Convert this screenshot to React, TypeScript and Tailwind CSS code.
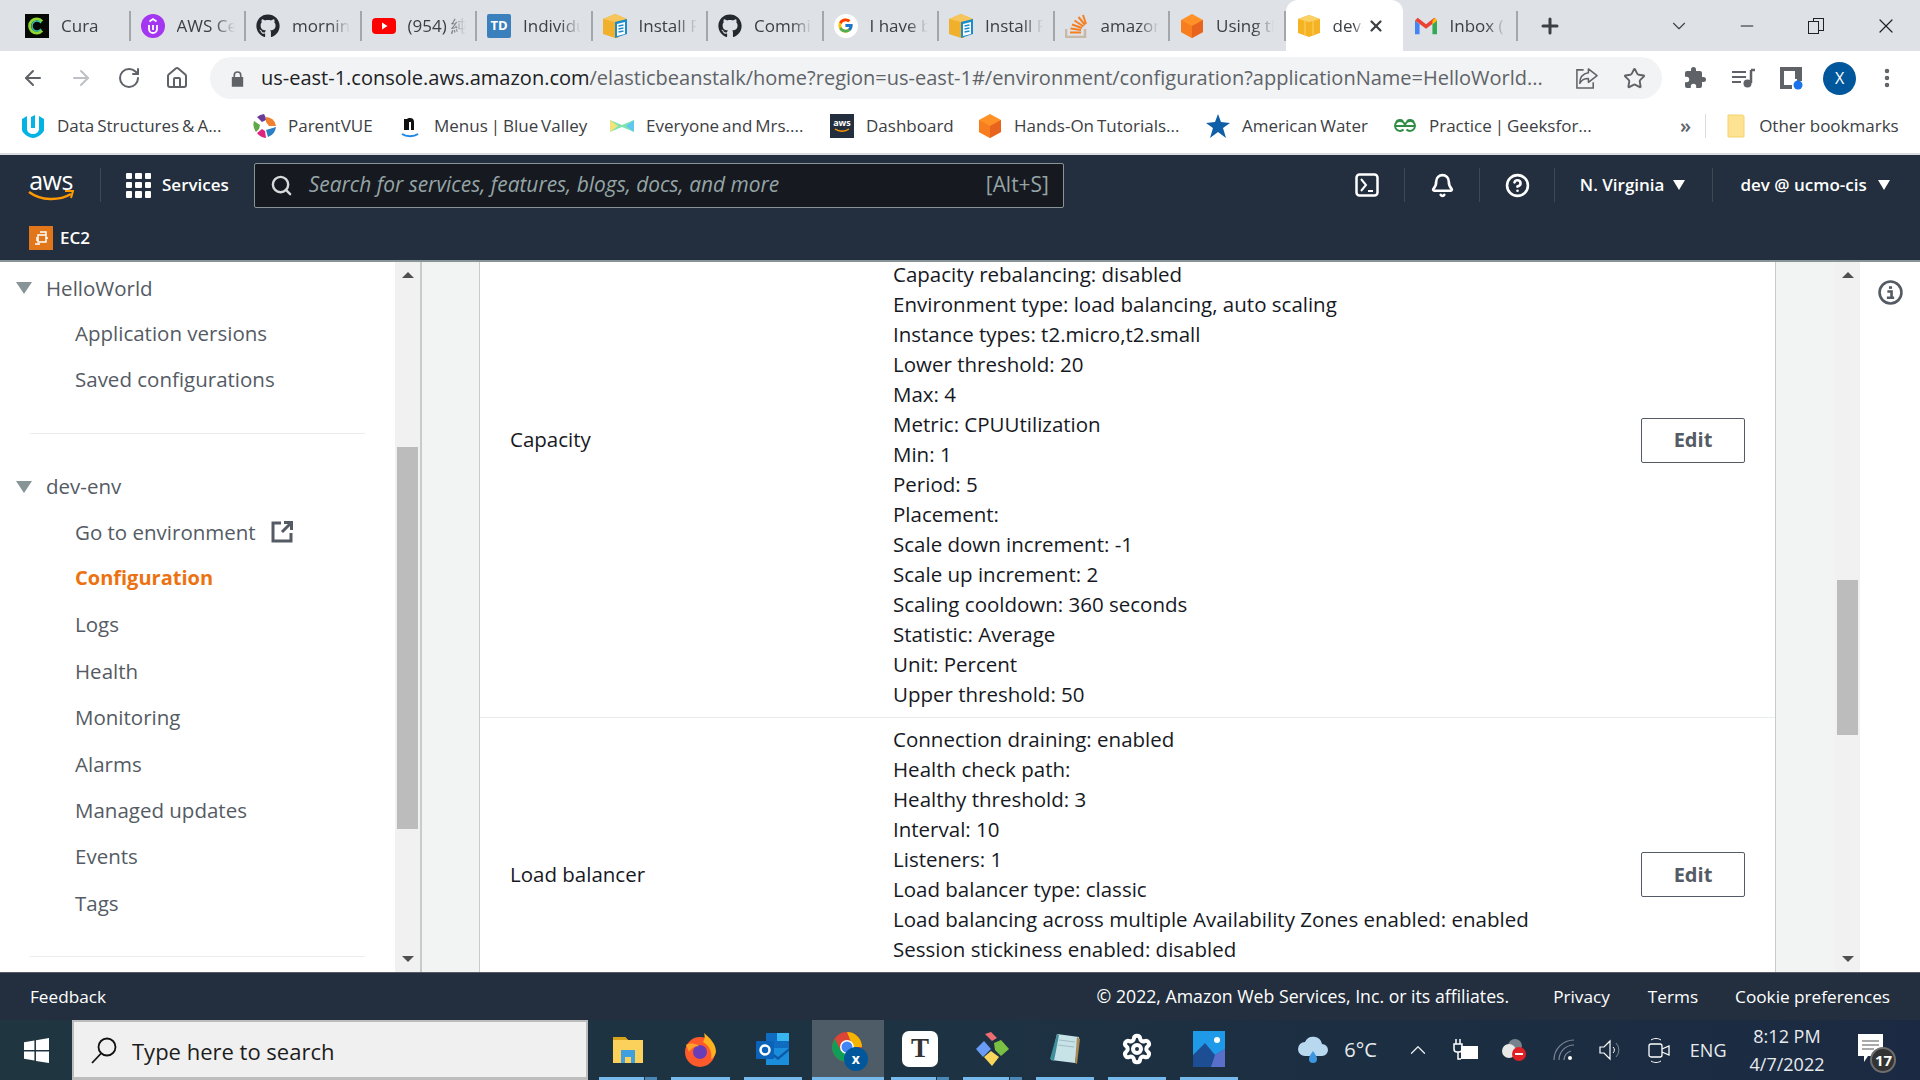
import React from 'react';
import { ArrowLeft, ArrowRight, RotateCw, Home, Star, Search, Bell, CircleHelp, Plus, X, Minus, ChevronDown, ChevronUp, EllipsisVertical, Settings } from 'lucide-react';
import { FaGithub } from 'react-icons/fa';
import { FcGoogle } from 'react-icons/fc';

const Cura = () => (
    <svg viewBox="0 0 24 24" className="w-full h-full"><rect width="24" height="24" fill="#050805" /><path d="M17 7.5a7 7 0 1 0 0 9" fill="none" stroke="#8fd630" strokeWidth="3" /><path d="M16 9a5 5 0 1 0 0 6" fill="none" stroke="#38bdb0" strokeWidth="1.5" /></svg>
);
const Udemy = () => (
    <svg viewBox="0 0 24 24" className="w-full h-full"><circle cx="12" cy="12" r="12" fill="#a435f0" /><path d="M8 11v4a4 4 0 0 0 8 0v-4M12 11v5M8.5 7.5 12 5l3.500 2.500" fill="none" stroke="#fff" strokeWidth="1.8" /></svg>
);
const Github = () => <FaGithub className="w-full h-full text-[#24292f]" />;
const Youtube = () => (
    <svg viewBox="0 0 24 24" className="w-full h-full"><rect y="4" width="24" height="16" rx="4" fill="#f00" /><path d="M10 8.500v7l5.500-3.500z" fill="#fff" /></svg>
);
const Td = () => (
    <div className="w-full h-full bg-[#3a80bd] rounded-[2px] flex items-center justify-center text-white text-[13px] font-bold font-['Open_Sans',sans-serif]">TD</div>
);
const InstallBox = () => (
    <svg viewBox="0 0 24 24" className="w-full h-full"><path d="M0 5l12-5 12 5v5l-9 1v13l-3 0-12-4z" fill="#f0b02c" /><path d="M0 5l12 3 12-3-12-5z" fill="#f6c65c" /><path d="M12 8l12-3v15l-12 4z" fill="#1a8ccb" /><path d="M14 10l8-2v12l-8 2z" fill="#fff" /><path d="M15.500 12l5-1M15.500 15l5-1M15.500 18l5-1" stroke="#1a8ccb" strokeWidth="1.500" /></svg>
);
const Google = () => (
    <div className="w-full h-full rounded-full bg-white flex items-center justify-center"><FcGoogle className="w-[17px] h-[17px]" /></div>
);
const Stack = () => (
    <svg viewBox="0 0 24 24" className="w-full h-full"><path d="M1 15v8h19v-8" fill="none" stroke="#c7b9a8" strokeWidth="2.500" /><path d="M5 18.500h11M5.500 14.500l10.500 1.500M7 10.500l10 3.500M9.500 6.500l9 6M13.500 3l6.500 8M18 1l3 9" stroke="#f48024" strokeWidth="2" /></svg>
);
const OrangeCube = () => (
    <svg viewBox="0 0 24 24" className="w-full h-full"><path d="M12 0l11 6v12l-11 6-11-6V6z" fill="#ff9126" /><path d="M12 12l11-6v12l-11 6z" fill="#e8641e" /><path d="M12 12v12L1 18V6z" fill="#f87d1f" /></svg>
);
const YellowBox = () => (
    <svg viewBox="0 0 24 24" className="w-full h-full"><path d="M1 5l11-4 11 4v14l-11 4-11-4z" fill="#f5b324" /><path d="M1 5l11 3 11-3-11-4z" fill="#fbd166" /><path d="M8 7v15M16 7v15" stroke="#fbd166" strokeWidth="1" /></svg>
);
const Gmail = () => (
    <svg viewBox="0 0 24 24" className="w-full h-full"><path d="M0 6v15h5V10z" fill="#4285f4" /><path d="M24 6v15h-5V10z" fill="#34a853" /><path d="M0 6l12 9 12-9-3-3-9 7-9-7z" fill="#ea4335" /><path d="M19 6l3-3 2 3-5 4z" fill="#fbbc04" /></svg>
);
const Udacity = () => (
    <svg viewBox="0 0 24 24" className="w-full h-full"><path d="M1 5l5-3v13c0 3 3 5 6 5s6-2 6-5V2l5 3v11c0 3-7 8-11 8S1 19 1 16z" fill="#02b3e4" /><path d="M10 3l4-2v13h-4z" fill="#02b3e4" /></svg>
);
const ParentVue = () => (
    <svg viewBox="0 0 24 24" className="w-full h-full"><path d="M12 0a12 12 0 0 1 2 6l-4 2-5-5a12 12 0 0 1 7-3z" fill="#6a3c96" /><path d="M14 3a10 10 0 0 1 10 9l-7 0-3-4z" fill="#f07f2e" /><path d="M24 13a12 12 0 0 1-8 10l-2-7z" fill="#2c7fc2" /><path d="M14 24a12 12 0 0 1-9-5l5-4 3 2z" fill="#e0237e" /><path d="M4 18a12 12 0 0 1-2-11l6 4-1 4z" fill="#5fa84a" /></svg>
);
const Noodle = () => (
    <svg viewBox="0 0 24 24" className="w-full h-full"><path d="M6 16V5h3a3 3 0 0 1 3-1 4 4 0 0 1 4 4v8h-3V8h-2v8z" fill="#111" /><path d="M4 20c4 3 12 3 16 0" fill="none" stroke="#1e88e5" strokeWidth="2" /></svg>
);
const Everyone = () => (
    <svg viewBox="0 0 24 24" className="w-full h-full"><path d="M0 6l12 5 12-5v12l-12-5-12 5z" fill="#7fe3b0" /><path d="M0 6l8 6-8 6z" fill="#f5e27a" /><path d="M24 6l-8 6 8 6z" fill="#62c7f0" /></svg>
);
const AwsTile = () => (
    <svg viewBox="0 0 24 24" className="w-full h-full"><rect width="24" height="24" fill="#232f3e" /><text x="12" y="12" textAnchor="middle" fontSize="9" fontWeight="700" fill="#fff" fontFamily="Open Sans">aws</text><path d="M5 15c4 3 10 3 14 0" fill="none" stroke="#f90" strokeWidth="1.500" /></svg>
);
const BlueStar = () => (
    <svg viewBox="0 0 24 24" className="w-full h-full"><path d="M12 0l3 8 9 1-7 5 3 10-8-6-8 6 3-10-7-5 9-1z" fill="#0f5ea8" /></svg>
);
const Gfg = () => (
    <svg viewBox="0 0 24 24" className="w-full h-full"><path d="M2 12h20M12 12a5 5 0 1 0-1.500 3.500M12 12a5 5 0 1 1 1.500 3.500" fill="none" stroke="#2f8d46" strokeWidth="2" /><path d="M3 8a5 5 0 0 1 7-1M21 8a5 5 0 0 0-7-1" fill="none" stroke="#2f8d46" strokeWidth="2" /></svg>
);

const tabs = [
    { icon: <Cura />, title: 'Cura' },
    { icon: <Udemy />, title: 'AWS Certified' },
    { icon: <Github />, title: 'morning-' },
    { icon: <Youtube />, title: '(954) 純音' },
    { icon: <Td />, title: 'Individual' },
    { icon: <InstallBox />, title: 'Install Python' },
    { icon: <Github />, title: 'Commits' },
    { icon: <Google />, title: 'I have been' },
    { icon: <InstallBox />, title: 'Install Python' },
    { icon: <Stack />, title: 'amazon-' },
    { icon: <OrangeCube />, title: 'Using the' },
];

const bookmarks = [
    { icon: <Udacity />, label: 'Data Structures & A...', w: 231 },
    { icon: <ParentVue />, label: 'ParentVUE', w: 146 },
    { icon: <Noodle />, label: 'Menus | Blue Valley', w: 212 },
    { icon: <Everyone />, label: 'Everyone and Mrs....', w: 220 },
    { icon: <AwsTile />, label: 'Dashboard', w: 148 },
    { icon: <OrangeCube />, label: 'Hands-On Tutorials...', w: 228 },
    { icon: <BlueStar />, label: 'American Water', w: 187 },
    { icon: <Gfg />, label: 'Practice | Geeksfor...', w: 287 },
];

const capacityLines = [
    'Capacity rebalancing: disabled',
    'Environment type: load balancing, auto scaling',
    'Instance types: t2.micro,t2.small',
    'Lower threshold: 20',
    'Max: 4',
    'Metric: CPUUtilization',
    'Min: 1',
    'Period: 5',
    'Placement:',
    'Scale down increment: -1',
    'Scale up increment: 2',
    'Scaling cooldown: 360 seconds',
    'Statistic: Average',
    'Unit: Percent',
    'Upper threshold: 50',
];

const balancerLines = [
    'Connection draining: enabled',
    'Health check path:',
    'Healthy threshold: 3',
    'Interval: 10',
    'Listeners: 1',
    'Load balancer type: classic',
    'Load balancing across multiple Availability Zones enabled: enabled',
    'Session stickiness enabled: disabled',
];

const navLinks = ['Logs', 'Health', 'Monitoring', 'Alarms', 'Managed updates', 'Events', 'Tags'];

const Tab: React.FC<{ icon: React.ReactNode; title: string }> = ({ icon, title }) => (
    <div className="w-[115.5px] h-[30px] shrink-0 flex items-center pl-[10px] border-r-2 border-[#a3a6aa]">
        <div className="w-6 h-6 shrink-0">{icon}</div>
        <div className="ml-3 w-[58px] overflow-hidden whitespace-nowrap text-[17px] text-[#3c4043] [mask-image:linear-gradient(to_right,black_65%,transparent)]">{title}</div>
    </div>
);

const Scrollbar: React.FC<{ thumbTop: number; thumbHeight: number }> = ({ thumbTop, thumbHeight }) => (
    <div className="w-[25px] h-full shrink-0 bg-[#f1f1f1] flex flex-col items-center">
        <div className="mt-[10px] w-0 h-0 border-x-[6px] border-x-transparent border-b-[6px] border-b-[#505050]" />
        <div className="w-[21px] bg-[#bcbcbc]" style={{ marginTop: thumbTop, height: thumbHeight }} />
        <div className="mt-auto mb-[10px] w-0 h-0 border-x-[6px] border-x-transparent border-t-[6px] border-t-[#505050]" />
    </div>
);

const NavRow: React.FC<{ children: React.ReactNode; active?: boolean }> = ({ children, active }) => (
    <div className={`h-[46.4px] pl-[75px] flex items-center ${active ? 'text-[#ec7211] font-bold text-[20px]' : 'text-[#545b64]'}`}>{children}</div>
);

const GroupRow: React.FC<{ label: string }> = ({ label }) => (
    <div className="h-[44px] flex items-center pl-[16px] text-[#545b64]">
        <div className="w-0 h-0 border-x-[8px] border-x-transparent border-t-[12px] border-t-[#879596]" />
        <span className="ml-[14px]">{label}</span>
    </div>
);

const EditButton = () => (
    <button className="w-[104px] h-[45px] shrink-0 bg-white border border-[#545b64] rounded-[2px] text-[20px] font-bold text-[#545b64]">Edit</button>
);

const Slot: React.FC<{ children: React.ReactNode; active?: boolean; split?: boolean; open?: boolean }> = ({ children, active, split, open = true }) => (
    <div className={`w-[72.25px] h-full shrink-0 flex flex-col ${active ? 'bg-[#4d5c66]' : ''}`}>
        <div className="flex-1 flex items-center justify-center"><div className="w-[36px] h-[36px] relative">{children}</div></div>
        {open && (
            <div className={`h-[3px] flex gap-[1px] ${active ? '' : 'mx-[7px]'}`}>
                <div className="flex-1 bg-[#76b9ed]" />
                {split && <div className="w-[12px] bg-[#4a87b5]" />}
            </div>
        )}
    </div>
);

const App: React.FC = () => {
    return (
        <div className="w-[1920px] h-[1080px] overflow-hidden flex flex-col font-['Open_Sans',sans-serif] bg-white">
            {/* browser tab strip */}
            <div className="h-[51px] shrink-0 bg-[#dee1e6] flex items-center pl-[15px]">
                {tabs.map((t, i) => <Tab key={i} icon={t.icon} title={t.title} />)}
                <div className="w-[117px] h-[51px] shrink-0 bg-white rounded-t-[12px] flex items-center pl-[11px]">
                    <div className="w-6 h-6 shrink-0"><YellowBox /></div>
                    <div className="ml-[12px] w-[30px] overflow-hidden whitespace-nowrap text-[17px] text-[#3c4043] [mask-image:linear-gradient(to_right,black_70%,transparent)]">dev-env</div>
                    <X className="ml-[4px] w-[18px] h-[18px] text-[#3c4043]" strokeWidth={3} />
                </div>
                <div className="w-[115px] h-[30px] shrink-0 flex items-center pl-[12px] border-r-2 border-[#a3a6aa]">
                    <div className="w-[22px] h-[22px] shrink-0"><Gmail /></div>
                    <div className="ml-[13px] w-[56px] overflow-hidden whitespace-nowrap text-[17px] text-[#3c4043] [mask-image:linear-gradient(to_right,black_65%,transparent)]">Inbox (17)</div>
                </div>
                <Plus className="ml-[20px] w-[24px] h-[24px] text-[#3c4043]" strokeWidth={3} />
                <ChevronDown className="ml-[106px] w-[22px] h-[22px] text-[#3c4043]" strokeWidth={1.2} />
                <Minus className="ml-[47px] w-[20px] h-[20px] text-[#202124]" strokeWidth={1.2} />
                <div className="ml-[51px] w-[16px] h-[16px] relative">
                    <div className="absolute right-0 top-0 w-[11px] h-[13px] border border-[#202124]" />
                    <div className="absolute left-0 bottom-0 w-[11px] h-[13px] border border-[#202124] bg-[#dee1e6]" />
                </div>
                <X className="ml-[50px] w-[24px] h-[24px] text-[#202124]" strokeWidth={1.2} />
            </div>

            {/* address row */}
            <div className="h-[51px] shrink-0 flex items-center pt-[3px]">
                <ArrowLeft className="ml-[21px] w-6 h-6 text-[#5f6368]" strokeWidth={2} />
                <ArrowRight className="ml-[24px] w-6 h-6 text-[#bdc1c6]" strokeWidth={2} />
                <RotateCw className="ml-[24px] w-6 h-6 text-[#5f6368]" strokeWidth={2} />
                <Home className="ml-[24px] w-6 h-6 text-[#5f6368]" strokeWidth={2} />
                <div className="ml-[21px] w-[1452px] h-[42px] rounded-full bg-[#f1f3f4] flex items-center pl-[21px]">
                    <svg viewBox="0 0 16 20" className="w-[13px] h-[17px] shrink-0"><path d="M3 8V6a5 5 0 0 1 10 0v2h2v12H1V8zm2 0h6V6a3 3 0 0 0-6 0z" fill="#5f6368" /></svg>
                    <div className="ml-[17px] w-[1300px] shrink-0 whitespace-nowrap overflow-hidden text-[20px] text-[#5f6368]"><span className="text-[#202124]">us-east-1.console.aws.amazon.com</span>/elasticbeanstalk/home?region=us-east-1#/environment/configuration?applicationName=HelloWorld...</div>
                    <svg viewBox="0 0 24 24" className="ml-[14px] w-[23px] h-[23px] shrink-0"><path d="M9 3H2v19h17v-6" fill="none" stroke="#5f6368" strokeWidth="1.600" /><path d="M14 2l9 7-9 7v-4c-4 0-7 1-9 5 0-6 3-10 9-11z" fill="none" stroke="#5f6368" strokeWidth="1.600" strokeLinejoin="round" /></svg>
                    <Star className="ml-[25px] w-[23px] h-[23px] text-[#5f6368]" strokeWidth={2} />
                </div>
                <svg viewBox="0 0 24 24" className="ml-[21px] w-[24px] h-[24px] shrink-0"><path d="M20.500 11H19V7a2 2 0 0 0-2-2h-4V3.500a2.500 2.500 0 0 0-5 0V5H4a2 2 0 0 0-2 2v3.800h1.500a2.700 2.700 0 0 1 0 5.400H2V20a2 2 0 0 0 2 2h3.800v-1.500a2.700 2.700 0 0 1 5.400 0V22H17a2 2 0 0 0 2-2v-4h1.500a2.500 2.500 0 0 0 0-5z" fill="#5f6368" /></svg>
                <svg viewBox="0 0 24 24" className="ml-[24px] w-[24px] h-[24px] shrink-0"><path d="M1 6h14M1 11h14M1 16h9" stroke="#5f6368" strokeWidth="2" /><path d="M20 4v13" stroke="#5f6368" strokeWidth="2.500" /><path d="M20 4h4" stroke="#5f6368" strokeWidth="2.500" /><circle cx="16.500" cy="17.500" r="4" fill="#5f6368" /></svg>
                <svg viewBox="0 0 24 24" className="ml-[24px] w-[24px] h-[24px] shrink-0"><path d="M1 1h22v14h-5V5H5v14h8v4H1z" fill="#5f6368" /><path d="M16 3h7v10h-7z" fill="#5f6368" /><circle cx="19" cy="19" r="4.500" fill="#1a73e8" /></svg>
                <div className="ml-[20px] w-[33px] h-[33px] shrink-0 rounded-full bg-[#01579b] text-white flex items-center justify-center text-[16px]">X</div>
                <EllipsisVertical className="ml-[19px] w-6 h-6 text-[#5f6368]" strokeWidth={2.500} />
            </div>

            {/* bookmarks */}
            <div className="h-[51px] shrink-0 flex items-center text-[17px] text-[#3c4043] pl-[21px] pb-[3px]">
                {bookmarks.map(b => (
                    <div key={b.label} className="flex items-center shrink-0" style={{ width: b.w }}>
                        <div className="w-6 h-6 shrink-0">{b.icon}</div>
                        <span className="ml-3 whitespace-nowrap [word-spacing:-1.5px]">{b.label}</span>
                    </div>
                ))}
                <span className="text-[#5f6368] text-[20px] font-semibold">»</span>
                <div className="ml-[14px] w-px h-[24px] bg-[#dadce0]" />
                <svg viewBox="0 0 18 24" className="ml-[21px] w-[18px] h-[24px] shrink-0"><path d="M1 1h14a2 2 0 0 1 2 2v20H1z" fill="#fde293" stroke="#f5d36b" /></svg>
                <span className="ml-[14px] whitespace-nowrap">Other bookmarks</span>
            </div>
            <div className="h-[2px] shrink-0 bg-[#dadce0]" />

            {/* console header */}
            <div className="h-[105px] shrink-0 bg-[#232f3e] text-white flex flex-col">
                <div className="h-[60px] shrink-0 flex items-center text-[17px]">
                    <div className="ml-[28px] w-[46px] h-[34px] shrink-0 relative">
                        <div className="text-[25px] leading-[24px] font-medium text-center -tracking-[0.5px]">aws</div>
                        <svg viewBox="0 0 46 12" className="absolute left-0 bottom-0 w-[46px] h-[12px]"><path d="M1 2c12 9 30 9 42 2" fill="none" stroke="#ff9900" strokeWidth="2.500" /><path d="M37 1l8 0-2 7" fill="none" stroke="#ff9900" strokeWidth="2" /></svg>
                    </div>
                    <div className="ml-[26px] w-px h-[34px] bg-[#414750]" />
                    <div className="ml-[25px] w-[25px] h-[25px] grid grid-cols-3 gap-[3px] shrink-0">
                        {Array.from({ length: 9 }).map((_, i) => <div key={i} className="bg-white rounded-[1px]" />)}
                    </div>
                    <span className="ml-[11px] font-semibold">Services</span>
                    <div className="ml-[25px] w-[810px] h-[45px] shrink-0 bg-[#16191f] border border-[#879596] rounded-[2px] flex items-center pl-[15px] pr-[14px] text-[#95a5a6] text-[20.9px]">
                        <Search className="w-[23px] h-[23px] text-[#d5dbdb]" strokeWidth={2.500} />
                        <span className="ml-[16px] italic">Search for services, features, blogs, docs, and more</span>
                        <span className="ml-auto">[Alt+S]</span>
                    </div>
                    <svg viewBox="0 0 24 24" className="ml-[291px] w-[24px] h-[26px] shrink-0"><rect x="1.500" y="1.500" width="21" height="21" rx="3" fill="none" stroke="#fff" strokeWidth="2.500" /><path d="M6 6l5 6-5 6M13 18h5" fill="none" stroke="#fff" strokeWidth="2" /></svg>
                    <div className="ml-[25px] w-px h-[34px] bg-[#414750]" />
                    <Bell className="ml-[25px] w-[25px] h-[25px]" strokeWidth={2.500} />
                    <div className="ml-[24px] w-px h-[34px] bg-[#414750]" />
                    <CircleHelp className="ml-[25px] w-[25px] h-[25px]" strokeWidth={2.500} />
                    <div className="ml-[24px] w-px h-[34px] bg-[#414750]" />
                    <span className="ml-[25px] font-semibold whitespace-nowrap">N. Virginia</span>
                    <div className="ml-[9px] w-0 h-0 border-x-[6px] border-x-transparent border-t-[10px] border-t-white" />
                    <div className="ml-[27px] w-px h-[34px] bg-[#414750]" />
                    <span className="ml-[27px] font-semibold whitespace-nowrap">dev @ ucmo-cis</span>
                    <div className="ml-[11px] w-0 h-0 border-x-[6px] border-x-transparent border-t-[10px] border-t-white" />
                </div>
                <div className="flex-1 flex items-center pl-[29px]">
                    <svg viewBox="0 0 24 24" className="w-[24px] h-[24px] shrink-0"><rect width="24" height="24" fill="#e2761b" /><path d="M9 9h8v7H9zM7 12h2M7 14h2M17 12h2M11 6h6v3M6 18h5" fill="none" stroke="#fff" strokeWidth="1.500" /></svg>
                    <span className="ml-[7px] text-[17px] font-semibold">EC2</span>
                </div>
            </div>
            <div className="h-[2px] shrink-0 bg-[#879596]" />

            {/* console body */}
            <div className="flex-1 min-h-0 flex text-[20.5px] font-['Open_Sans',sans-serif]">
                <div className="w-[395px] shrink-0 pt-[4px] overflow-hidden">
                    <GroupRow label="HelloWorld" />
                    <NavRow>Application versions</NavRow>
                    <NavRow>Saved configurations</NavRow>
                    <div className="mt-[30px] mb-[31px] ml-[30px] w-[335px] h-px bg-[#eaeded]" />
                    <GroupRow label="dev-env" />
                    <NavRow>
                        Go to environment
                        <svg viewBox="0 0 22 22" className="ml-[15px] w-[22px] h-[22px]"><path d="M10 2H2v18h18v-8M13 1.500h7.500V9M20 2l-9 9" fill="none" stroke="#545b64" strokeWidth="3" /></svg>
                    </NavRow>
                    <NavRow active>Configuration</NavRow>
                    {navLinks.map(l => <NavRow key={l}>{l}</NavRow>)}
                    <div className="mt-[30px] ml-[30px] w-[335px] h-px bg-[#eaeded]" />
                </div>
                <Scrollbar thumbTop={169} thumbHeight={382} />
                <div className="flex-1 min-w-0 bg-[#f2f3f3] border-x-2 border-[#c6cccc] flex pl-[57px]">
                    <div className="w-[1297px] h-full overflow-hidden bg-white border-x border-[#c6cccc] shrink-0 text-[#16191f]">
                        <div className="-mt-[99px] h-[555px] flex items-center border-b border-[#eaeded] pl-[30px] pr-[30px]">
                            <div className="w-[383px] shrink-0 pb-[2px]">Capacity</div>
                            <div className="flex-1 self-end pb-[8px] leading-[30px]">
                                {capacityLines.map(l => <div key={l}>{l}</div>)}
                            </div>
                            <EditButton />
                        </div>
                        <div className="h-[313px] flex items-center pl-[30px] pr-[30px]">
                            <div className="w-[383px] shrink-0">Load balancer</div>
                            <div className="flex-1 self-start pt-[6px] leading-[30px]">
                                {balancerLines.map(l => <div key={l}>{l}</div>)}
                            </div>
                            <EditButton />
                        </div>
                    </div>
                    <div className="ml-[59px]"><Scrollbar thumbTop={302} thumbHeight={155} /></div>
                </div>
                <div className="w-[60px] shrink-0 flex justify-center pt-[18px]">
                    <svg viewBox="0 0 24 24" className="w-[25px] h-[25px]"><circle cx="12" cy="12" r="10.500" fill="none" stroke="#545b64" strokeWidth="2.500" /><path d="M12 6v2.500" stroke="#545b64" strokeWidth="3" /><path d="M9 11h4v6M8.500 17h7" fill="none" stroke="#545b64" strokeWidth="2.500" /></svg>
                </div>
            </div>

            {/* console footer */}
            <div className="h-[48px] shrink-0 bg-[#232f3e] border-t border-[#545b64] flex items-center text-white text-[17.2px] font-medium pl-[30px] pr-[30px]">
                <span>Feedback</span>
                <span className="ml-auto text-[17.7px]">© 2022, Amazon Web Services, Inc. or its affiliates.</span>
                <span className="ml-[44px]">Privacy</span>
                <span className="ml-[38px]">Terms</span>
                <span className="ml-[37px]">Cookie preferences</span>
            </div>

            {/* windows taskbar */}
            <div className="h-[60px] shrink-0 flex bg-gradient-to-r from-[#1f3540] via-[#1d3242] to-[#1b2a42] text-white">
                <div className="w-[72px] shrink-0 flex items-center justify-center">
                    <svg viewBox="0 0 24 24" className="w-[25px] h-[27px]"><path d="M0 4l10-1.500V11.500H0zM11.500 2.200L24 0v11.500H11.500zM0 13h10v8.500L0 20zM11.500 13H24v11l-12.500-2z" fill="#fff" /></svg>
                </div>
                <div className="w-[516px] shrink-0 bg-[#f0f0f0] border-2 border-[#bdbdbd] border-b-[3px] flex items-center pl-[16px] pt-[3px] text-[22px] text-[#1c1c1c]">
                    <svg viewBox="0 0 28 28" className="w-[28px] h-[28px] -mt-[3px]"><circle cx="17" cy="11" r="8.500" fill="none" stroke="#111" strokeWidth="1.800" /><path d="M11 17.500L2 27" stroke="#111" strokeWidth="1.800" /></svg>
                    <span className="ml-[14px] whitespace-nowrap">Type here to search</span>
                </div>
                <div className="ml-[4px] flex h-full">
                    <Slot split>
                        <svg viewBox="0 0 36 36" className="w-full h-full"><path d="M3 6h12l3 3h15v23H3z" fill="#fbd15b" /><path d="M3 6h12l3 3H3z" fill="#d9a21b" /><path d="M11 19h14v13h-4v-6h-6v6h-4z" fill="#3f9fdf" /></svg>
                    </Slot>
                    <Slot>
                        <svg viewBox="0 0 36 36" className="w-full h-full"><circle cx="18" cy="21" r="15" fill="#ff5a2b" /><path d="M22 2c6 5 12 11 12 19a10 10 0 0 1-5 7c2-8-3-14-8-17 2-3 2-6 1-9z" fill="#ffb21e" /><circle cx="18" cy="21" r="7" fill="#6a3db8" /><path d="M4 14c4-2 9-2 13 1-5 0-8 3-10 6z" fill="#ffa02b" /></svg>
                    </Slot>
                    <Slot>
                        <svg viewBox="0 0 36 36" className="w-full h-full"><rect x="11" y="2" width="23" height="17" fill="#0f6cc0" /><rect x="22" y="2" width="12" height="8" fill="#38b6f0" /><path d="M11 17h23v17H11z" fill="#1a8ddb" /><path d="M11 17l12 9 11-9v3l-11 9-12-9z" fill="#0a5aa8" /><rect x="1" y="10" width="18" height="18" rx="1" fill="#0a63b8" /><circle cx="10" cy="19" r="4.500" fill="none" stroke="#fff" strokeWidth="2.500" /></svg>
                    </Slot>
                    <div className="w-[3px]" />
                    <Slot active>
                        <svg viewBox="0 0 36 36" className="w-full h-full"><circle cx="17" cy="16" r="15" fill="#db4437" /><path d="M2 16a15 15 0 0 0 15 15l6-11H11L5 8a15 15 0 0 0-3 8z" fill="#0f9d58" /><path d="M17 1a15 15 0 0 1 15 15h-9z" fill="#f4b400" /><circle cx="17" cy="16" r="7" fill="#fff" /><circle cx="17" cy="16" r="5.500" fill="#4285f4" /></svg>
                        <div className="absolute right-[-2px] bottom-[-4px] w-[24px] h-[24px] rounded-full bg-[#01579b] flex items-center justify-center text-[14px] font-bold">x</div>
                    </Slot>
                    <Slot split>
                        <div className="w-full h-full rounded-[7px] bg-white text-[#333] flex items-center justify-center text-[27px] font-['Liberation_Serif',serif] font-bold">T</div>
                    </Slot>
                    <Slot split>
                        <svg viewBox="0 0 36 36" className="w-full h-full"><path d="M18 10l-7-7 6-2 6 6z" fill="#ee6d73" /><path d="M2 18l8-8 7 8-8 8z" fill="#6b9cf5" /><path d="M20 12l7-3 8 9-8 7-6-6z" fill="#7ac143" /><path d="M10 26l7-6 8 6-7 9z" fill="#f9d65c" /></svg>
                    </Slot>
                    <Slot>
                        <svg viewBox="0 0 36 36" className="w-full h-full"><path d="M10 3l22 3-4 26-24-3z" fill="#c7e3e8" /><path d="M10 3L3 28l4 2 5-26z" fill="#3f8f9c" /><path d="M30 6l3 2-3 25-2-1z" fill="#a88a52" /><path d="M12 9l16 2M11 14l16 2" stroke="#9fbcc2" /></svg>
                    </Slot>
                    <Slot open><Settings className="w-full h-full text-white p-[2px]" strokeWidth={3} /></Slot>
                    <Slot>
                        <svg viewBox="0 0 36 36" className="w-full h-full"><rect x="2" width="32" height="36" fill="#1f9ae8" /><path d="M2 36V24L14 12l10 12 10-6v18z" fill="#1d4e93" /><path d="M24 24l10-6v18H20z" fill="#5a6fc9" /><circle cx="26" cy="9" r="3" fill="#fff" /></svg>
                    </Slot>
                </div>
                <div className="flex-1 flex items-center text-[#e8ebee] text-[18px] h-full">
                    <svg viewBox="0 0 32 28" className="ml-[52px] w-[32px] h-[28px] shrink-0"><path d="M8 20a7 7 0 0 1 0-14 9 9 0 0 1 17 2 6 6 0 0 1 0 12z" fill="#b8d8f0" /><path d="M16 15c3 4 4 6 4 8a4 4 0 0 1-8 0c0-2 1-4 4-8z" fill="#3e96e0" /></svg>
                    <span className="ml-[15px] text-[20px] whitespace-nowrap">6°C</span>
                    <ChevronUp className="ml-[28px] w-[26px] h-[26px]" strokeWidth={1.2} />
                    <svg viewBox="0 0 26 26" className="ml-[22px] w-[26px] h-[26px] shrink-0"><path d="M3 2v5M7 2v5M1 7h8v5a3 3 0 0 1-3 3H4a3 3 0 0 1-3-3zM5 15v7h3" fill="none" stroke="#fff" strokeWidth="1.500" /><rect x="8" y="9" width="17" height="13" fill="#fff" /></svg>
                    <svg viewBox="0 0 26 26" className="ml-[22px] w-[26px] h-[26px] shrink-0"><circle cx="14" cy="9" r="7" fill="#78828c" /><circle cx="8" cy="14" r="7" fill="#e8e8e8" /><circle cx="18" cy="17" r="7" fill="#e02025" /><path d="M14 17h8" stroke="#fff" strokeWidth="2" /></svg>
                    <svg viewBox="0 0 24 24" className="ml-[25px] w-[24px] h-[24px] shrink-0"><path d="M2 22A20 20 0 0 1 22 2M7 22A15 15 0 0 1 22 7M12 22a10 10 0 0 1 7-9" fill="none" stroke="#7e8894" strokeWidth="1.200" /><circle cx="18" cy="20" r="2" fill="#fff" /></svg>
                    <svg viewBox="0 0 24 24" className="ml-[22px] w-[24px] h-[24px] shrink-0"><path d="M2 9h4l6-6v18l-6-6H2z" fill="none" stroke="#fff" strokeWidth="1.200" /><path d="M15 9a4 4 0 0 1 0 6" fill="none" stroke="#fff" /><path d="M18 5a10 10 0 0 1 0 14" fill="none" stroke="#7e8894" /></svg>
                    <svg viewBox="0 0 24 28" className="ml-[25px] w-[24px] h-[28px] shrink-0"><rect x="2" y="8" width="13" height="13" rx="2" fill="none" stroke="#fff" strokeWidth="1.300" /><path d="M15 13l7-3v9l-7-3" fill="none" stroke="#fff" strokeWidth="1.300" /><path d="M4 4c3-2 7-2 10 0M4 25c3 2 7 2 10 0" fill="none" stroke="#fff" /></svg>
                    <span className="ml-[19px] whitespace-nowrap">ENG</span>
                    <div className="ml-[23px] flex flex-col items-center leading-[28px] whitespace-nowrap">
                        <span>8:12 PM</span>
                        <span>4/7/2022</span>
                    </div>
                    <div className="ml-[34px] mt-[4px] w-[25px] h-[36px] relative shrink-0">
                        <svg viewBox="0 0 25 28" className="w-[25px] h-[28px]"><path d="M0 0h25v22H10l-4 6v-6H0z" fill="#fff" /><path d="M4 7h17M4 11h17M4 15h12" stroke="#555" /></svg>
                        <div className="absolute -right-[13px] -bottom-[3px] w-[26px] h-[26px] rounded-full bg-[#333] border-2 border-[#6e6e6e] text-white text-[15px] font-bold flex items-center justify-center">17</div>
                    </div>
                </div>
            </div>
        </div>
    );
};

export default App;
